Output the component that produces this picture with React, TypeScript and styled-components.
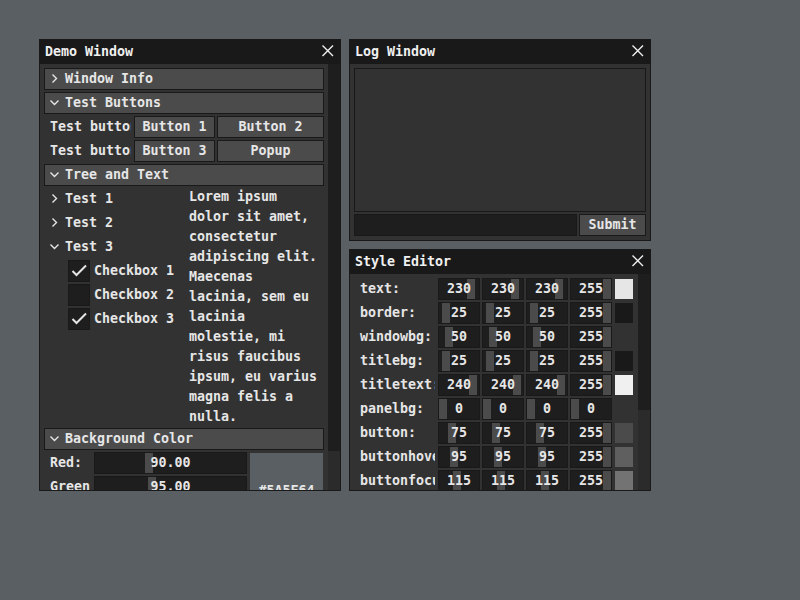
import React from "react";
import styled, { createGlobalStyle } from "styled-components";

const GlobalStyle = createGlobalStyle`
  html, body {
    margin: 0;
    padding: 0;
    background: rgb(90, 95, 100);
  }
  body {
    width: 800px;
    height: 600px;
    overflow: hidden;
    font-family: "DejaVu Sans Mono", "Liberation Mono", monospace;
    font-weight: bold;
    font-size: 13.3px;
    color: rgb(230, 230, 230);
  }
  * { box-sizing: border-box; }
`;

const BORDER = "rgb(25, 25, 25)";
const TEXT = "rgb(230, 230, 230)";

const Desktop = styled.div`
  position: relative;
  width: 800px;
  height: 600px;
`;

const Win = styled.div<{ $x: number; $y: number; $w: number; $h: number }>`
  position: absolute;
  left: ${(p) => p.$x - 1}px;
  top: ${(p) => p.$y - 1}px;
  width: ${(p) => p.$w + 2}px;
  height: ${(p) => p.$h + 2}px;
  border: 1px solid ${BORDER};
  background: rgb(50, 50, 50);
  display: flex;
  flex-direction: column;
`;

const TitleBar = styled.div`
  height: 24px;
  flex-shrink: 0;
  background: rgb(25, 25, 25);
  display: flex;
  align-items: center;
`;

const TitleText = styled.span`
  padding-left: 5px;
  line-height: 24px;
  color: rgb(240, 240, 240);
  white-space: nowrap;
`;

const CloseBox = styled.div`
  margin-left: auto;
  width: 24px;
  height: 24px;
  display: flex;
`;

const Body = styled.div`
  flex: 1;
  min-height: 0;
  display: flex;
`;

const Content = styled.div`
  flex: 1;
  min-width: 0;
  overflow: hidden;
  padding: 5px;
  display: flex;
  flex-direction: column;
  gap: 4px;
  & > * { flex-shrink: 0; }
`;

const Scrollbar = styled.div`
  width: 12px;
  flex-shrink: 0;
  background: rgb(43, 43, 43);
`;

const ScrollThumb = styled.div<{ $h: number }>`
  height: ${(p) => p.$h}px;
  background: rgb(30, 30, 30);
`;

const Header = styled.div`
  height: 20px;
  background: rgb(75, 75, 75);
  box-shadow: 0 0 0 1px ${BORDER};
  display: flex;
  align-items: center;
`;

const IconBox = styled.div`
  width: 20px;
  height: 20px;
  flex-shrink: 0;
  display: flex;
`;

const CtlText = styled.span`
  line-height: 20px;
  white-space: nowrap;
`;

const Row = styled.div<{ $h?: number }>`
  height: ${(p) => p.$h ?? 20}px;
  display: flex;
  gap: 4px;
`;

const Label = styled.div<{ $w: number }>`
  width: ${(p) => p.$w}px;
  flex-shrink: 0;
  padding-left: 5px;
  line-height: 20px;
  white-space: nowrap;
  overflow: hidden;
`;

const Button = styled.div<{ $w: number }>`
  width: ${(p) => p.$w}px;
  flex-shrink: 0;
  height: 20px;
  background: rgb(75, 75, 75);
  box-shadow: 0 0 0 1px ${BORDER};
  line-height: 20px;
  text-align: center;
  white-space: nowrap;
  overflow: hidden;
`;

const TextBox = styled.div<{ $w: number }>`
  width: ${(p) => p.$w}px;
  height: 20px;
  background: rgb(30, 30, 30);
  box-shadow: 0 0 0 1px ${BORDER};
`;

const Panel = styled.div<{ $h: number }>`
  height: ${(p) => p.$h}px;
  box-shadow: 0 0 0 1px ${BORDER};
`;

const Columns = styled.div`
  display: flex;
  gap: 4px;
`;

const Column = styled.div<{ $w: number; $indent?: number }>`
  width: ${(p) => p.$w}px;
  flex-shrink: 0;
  padding-left: ${(p) => p.$indent ?? 0}px;
  display: flex;
  flex-direction: column;
  gap: 4px;
`;

const TreeNode = styled.div`
  height: 20px;
  display: flex;
  align-items: center;
`;

const CheckRow = styled.div`
  height: 20px;
  display: flex;
  align-items: center;
`;

const CheckBox = styled.div`
  width: 20px;
  height: 20px;
  flex-shrink: 0;
  background: rgb(30, 30, 30);
  box-shadow: 0 0 0 1px ${BORDER};
  display: flex;
`;

const CheckLabel = styled.span`
  padding-left: 5px;
  line-height: 20px;
  white-space: nowrap;
`;

const TextLine = styled.div`
  height: 16px;
  line-height: 16px;
  white-space: nowrap;
`;

const Slider = styled.div<{ $w: number }>`
  position: relative;
  width: ${(p) => p.$w}px;
  flex-shrink: 0;
  height: 20px;
  background: rgb(30, 30, 30);
  box-shadow: 0 0 0 1px ${BORDER};
  display: flex;
  justify-content: center;
`;

const SliderThumb = styled.div`
  position: absolute;
  top: 0;
  bottom: 0;
  width: 8px;
  background: rgb(75, 75, 75);
`;

const SliderValue = styled.span`
  position: relative;
  line-height: 20px;
  white-space: nowrap;
`;

const Preview = styled.div<{ $w: number; $c: string }>`
  width: ${(p) => p.$w}px;
  flex-shrink: 0;
  background: ${(p) => p.$c};
  display: flex;
  align-items: center;
  justify-content: center;
  white-space: nowrap;
`;

const Swatch = styled.div<{ $c: string }>`
  width: 18px;
  height: 20px;
  flex-shrink: 0;
  background: ${(p) => p.$c};
`;

const CloseIcon = () => (
  <svg width="24" height="24" viewBox="0 0 24 24">
    <path
      d="M6.5 5.5 L17 16 M17 5.5 L6.5 16"
      stroke="rgb(240,240,240)"
      strokeWidth="1.4"
      fill="none"
    />
  </svg>
);

const Chevron = ({ open }: { open: boolean }) => (
  <svg width="20" height="20" viewBox="0 0 20 20">
    <polyline
      points={open ? "5.5,7.5 9.5,11.5 13.5,7.5" : "7.5,5.5 11.5,9.5 7.5,13.5"}
      stroke={TEXT}
      strokeWidth="1.4"
      fill="none"
    />
  </svg>
);

const CheckMark = () => (
  <svg width="20" height="20" viewBox="0 0 20 20">
    <polyline
      points="3.5,10 7.5,14 17,4.5"
      stroke={TEXT}
      strokeWidth="2"
      fill="none"
    />
  </svg>
);

const Window = ({
  x, y, w, h, title, children,
}: { x: number; y: number; w: number; h: number; title: string; children: React.ReactNode }) => (
  <Win $x={x} $y={y} $w={w} $h={h}>
    <TitleBar>
      <TitleText>{title}</TitleText>
      <CloseBox>
        <CloseIcon />
      </CloseBox>
    </TitleBar>
    <Body>{children}</Body>
  </Win>
);

const HeaderItem = ({ label, open }: { label: string; open: boolean }) => (
  <Header>
    <IconBox>
      <Chevron open={open} />
    </IconBox>
    <CtlText>{label}</CtlText>
  </Header>
);

const TreeItem = ({ label, open }: { label: string; open: boolean }) => (
  <TreeNode>
    <IconBox>
      <Chevron open={open} />
    </IconBox>
    <CtlText>{label}</CtlText>
  </TreeNode>
);

const CheckItem = ({ label, checked }: { label: string; checked: boolean }) => (
  <CheckRow>
    <CheckBox>{checked && <CheckMark />}</CheckBox>
    <CheckLabel>{label}</CheckLabel>
  </CheckRow>
);

const SliderCtl = ({ w, v, max, text }: { w: number; v: number; max: number; text: string }) => (
  <Slider $w={w}>
    <SliderThumb style={{ left: Math.floor((v * (w - 8)) / max) }} />
    <SliderValue>{text}</SliderValue>
  </Slider>
);

const loremLines = [
  "Lorem ipsum",
  "dolor sit amet,",
  "consectetur",
  "adipiscing elit.",
  "Maecenas",
  "lacinia, sem eu",
  "lacinia",
  "molestie, mi",
  "risus faucibus",
  "ipsum, eu varius",
  "magna felis a",
  "nulla.",
];

const styleColors: { name: string; v: number[] }[] = [
  { name: "text:", v: [230, 230, 230, 255] },
  { name: "border:", v: [25, 25, 25, 255] },
  { name: "windowbg:", v: [50, 50, 50, 255] },
  { name: "titlebg:", v: [25, 25, 25, 255] },
  { name: "titletext:", v: [240, 240, 240, 255] },
  { name: "panelbg:", v: [0, 0, 0, 0] },
  { name: "button:", v: [75, 75, 75, 255] },
  { name: "buttonhover:", v: [95, 95, 95, 255] },
  { name: "buttonfocus:", v: [115, 115, 115, 255] },
];

export default function App() {
  return (
    <>
      <GlobalStyle />
      <Desktop>
        <Window x={40} y={40} w={300} h={450} title="Demo Window">
          <Content>
            <HeaderItem label="Window Info" open={false} />
            <HeaderItem label="Test Buttons" open={true} />
            <Row>
              <Label $w={86}>Test buttons 1:</Label>
              <Button $w={79}>Button 1</Button>
              <Button $w={105}>Button 2</Button>
            </Row>
            <Row>
              <Label $w={86}>Test buttons 2:</Label>
              <Button $w={79}>Button 3</Button>
              <Button $w={105}>Popup</Button>
            </Row>
            <HeaderItem label="Tree and Text" open={true} />
            <Columns>
              <Column $w={140}>
                <TreeItem label="Test 1" open={false} />
                <TreeItem label="Test 2" open={false} />
                <TreeItem label="Test 3" open={true} />
                <Column $w={140} $indent={24}>
                  <CheckItem label="Checkbox 1" checked={true} />
                  <CheckItem label="Checkbox 2" checked={false} />
                  <CheckItem label="Checkbox 3" checked={true} />
                </Column>
              </Column>
              <Column $w={134}>
                {loremLines.map((l) => (
                  <TextLine key={l}>{l}</TextLine>
                ))}
              </Column>
            </Columns>
            <HeaderItem label="Background Color" open={true} />
            <Row $h={74}>
              <Column $w={201}>
                <Row>
                  <Label $w={46}>Red:</Label>
                  <SliderCtl w={151} v={90} max={255} text="90.00" />
                </Row>
                <Row>
                  <Label $w={46}>Green:</Label>
                  <SliderCtl w={151} v={95} max={255} text="95.00" />
                </Row>
                <Row>
                  <Label $w={46}>Blue:</Label>
                  <SliderCtl w={151} v={100} max={255} text="100.00" />
                </Row>
              </Column>
              <Preview $w={73} $c="rgb(90, 95, 100)">#5A5F64</Preview>
            </Row>
          </Content>
          <Scrollbar>
            <ScrollThumb $h={387} />
          </Scrollbar>
        </Window>

        <Window x={350} y={40} w={300} h={200} title="Log Window">
          <Content>
            <Panel $h={142} />
            <Row>
              <TextBox $w={221} />
              <Button $w={65}>Submit</Button>
            </Row>
          </Content>
        </Window>

        <Window x={350} y={250} w={300} h={240} title="Style Editor">
          <Content>
            {styleColors.map((c) => (
              <Row key={c.name}>
                <Label $w={80}>{c.name}</Label>
                {c.v.map((v, i) => (
                  <SliderCtl key={i} w={40} v={v} max={255} text={String(v)} />
                ))}
                <Swatch $c={`rgba(${c.v[0]}, ${c.v[1]}, ${c.v[2]}, ${c.v[3] / 255})`} />
              </Row>
            ))}
          </Content>
          <Scrollbar>
            <ScrollThumb $h={136} />
          </Scrollbar>
        </Window>
      </Desktop>
    </>
  );
}
